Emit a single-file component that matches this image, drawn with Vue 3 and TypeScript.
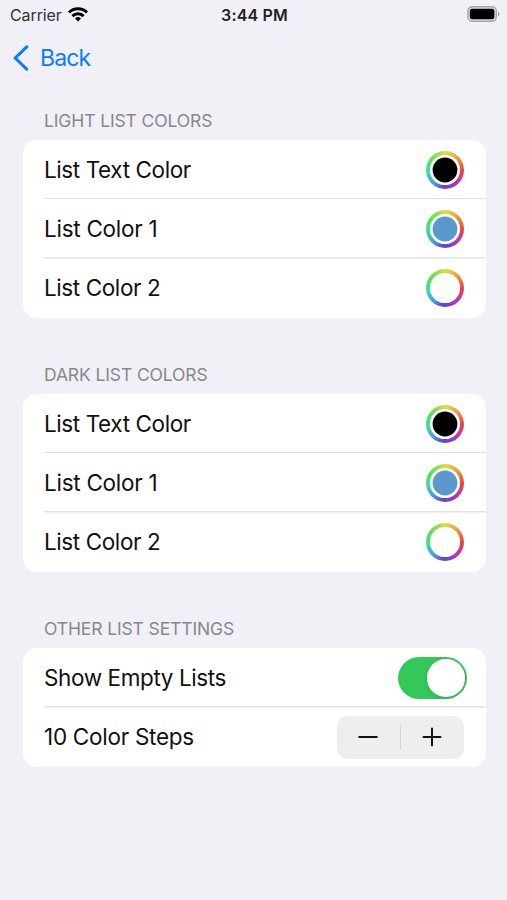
<script setup lang="ts">
import { ref } from 'vue'

interface ColorRow {
  label: string
  color: string
}

interface ColorSection {
  title: string
  rows: ColorRow[]
}

const makeRows = (): ColorRow[] => [
  { label: 'List Text Color', color: '#000000' },
  { label: 'List Color 1', color: '#5b99cc' },
  { label: 'List Color 2', color: '#ffffff' },
]

const sections = ref<ColorSection[]>([
  { title: 'Light List Colors', rows: makeRows() },
  { title: 'Dark List Colors', rows: makeRows() },
])

const showEmpty = ref(true)
const steps = ref(10)
</script>

<template>
  <div class="screen">
    <header class="status">
      <div class="carrier">
        <span>Carrier</span>
        <svg class="wifi" viewBox="0 0 20 15" width="20" height="15">
          <g fill="none" stroke="#000" stroke-width="2.9">
            <path d="M1 5.5a12.8 12.8 0 0 1 18 0" />
            <path d="M4.4 9.1a8 8 0 0 1 11.2 0" />
          </g>
          <path d="M10 14.4l-3-3a4.3 4.3 0 0 1 6 0z" fill="#000" />
        </svg>
      </div>
      <span class="time">3:44 PM</span>
      <svg class="battery" viewBox="0 0 33 16" width="33" height="16">
        <rect x="0.9" y="0.7" width="28.4" height="14.6" rx="4.2" fill="#e2e2e5" stroke="#a5a5a8" stroke-width="1.4" />
        <rect x="2.8" y="2.8" width="24.6" height="10.4" rx="2.3" fill="#000" />
        <path d="M31 5.7c2 .7 2 3.9 0 4.6z" fill="#a5a5a8" />
      </svg>
    </header>

    <nav class="nav">
      <button class="back" type="button">
        <svg viewBox="0 0 16 26" width="16" height="26">
          <path d="M13.7 1.9L2.2 13l11.5 11.1" fill="none" stroke="#087cff" stroke-width="3.1" stroke-linecap="round" stroke-linejoin="round" />
        </svg>
        <span>Back</span>
      </button>
    </nav>

    <main class="content">
      <section v-for="section in sections" :key="section.title" class="section">
        <h2>{{ section.title }}</h2>
        <div class="card">
          <div v-for="row in section.rows" :key="row.label" class="row">
            <span class="label">{{ row.label }}</span>
            <button class="well" type="button" :aria-label="row.label">
              <svg viewBox="0 0 38 38" width="38" height="38">
                <circle cx="19" cy="19" r="15.1" fill="#fff" />
                <circle cx="19" cy="19" r="12.4" :fill="row.color" />
              </svg>
            </button>
          </div>
        </div>
      </section>

      <section class="section">
        <h2>Other List Settings</h2>
        <div class="card short">
          <div class="row">
            <span class="label">Show Empty Lists</span>
            <button class="toggle" :class="{ on: showEmpty }" type="button" role="switch" :aria-checked="showEmpty" @click="showEmpty = !showEmpty">
              <span class="knob"></span>
            </button>
          </div>
          <div class="row">
            <span class="label steps">{{ steps }} Color Steps</span>
            <div class="stepper">
              <button type="button" aria-label="Decrease" @click="steps--">
                <svg viewBox="0 0 20 20" width="20" height="20">
                  <path d="M1.2 10h17.6" stroke="#111" stroke-width="2" stroke-linecap="round" />
                </svg>
              </button>
              <span class="divider"></span>
              <button type="button" aria-label="Increase" @click="steps++">
                <svg viewBox="0 0 20 20" width="20" height="20">
                  <path d="M1.5 10h17M10 1.5v17" stroke="#111" stroke-width="2" stroke-linecap="round" />
                </svg>
              </button>
            </div>
          </div>
        </div>
      </section>
    </main>
  </div>
</template>

<style>
body {
  background: #f1f0f6;
}
</style>

<style scoped>
.screen {
  box-sizing: border-box;
  width: 507px;
  height: 900px;
  overflow: hidden;
  background: #f1f0f6;
  font-family: Inter, "Liberation Sans", sans-serif;
  color: #111;
}

button {
  margin: 0;
  padding: 0;
  border: 0;
  background: none;
  font: inherit;
  color: inherit;
}

svg {
  display: block;
}

.status {
  display: grid;
  grid-template-columns: 1fr auto 1fr;
  align-items: center;
  height: 30px;
  padding: 0 8px 0 10px;
}

.carrier {
  display: flex;
  align-items: center;
  gap: 6.5px;
  font-size: 16px;
  letter-spacing: -0.1px;
  color: #333;
}

.wifi {
  margin-top: -1px;
}

.time {
  font-size: 16px;
  font-weight: 600;
  letter-spacing: 0.15px;
  color: #222;
}

.battery {
  justify-self: end;
  margin: -2px -1px 0 0;
}

.nav {
  display: flex;
  align-items: center;
  height: 56px;
  padding-left: 12.5px;
}

.back {
  display: flex;
  align-items: center;
  gap: 11.5px;
  font-size: 23px;
  line-height: 28px;
  color: #087cff;
}

.back span {
  letter-spacing: -0.85px;
}

.content {
  padding: 24px 21.5px 0 22.5px;
}

.section {
  height: 254px;
}

h2 {
  margin: 0;
  height: 30px;
  padding-left: 21.5px;
  font-size: 17.5px;
  font-weight: 400;
  line-height: 22px;
  letter-spacing: -0.12px;
  text-transform: uppercase;
  color: #88878c;
}

.card {
  display: grid;
  grid-template-rows: repeat(3, 1fr);
  height: 178px;
  border-radius: 14px;
  background: #fff;
}

.card.short {
  grid-template-rows: repeat(2, 1fr);
  height: 119px;
}

.row {
  display: flex;
  align-items: center;
  justify-content: space-between;
  margin-left: 21.5px;
  padding-right: 21.5px;
}

.row:not(:last-child) {
  background: linear-gradient(#e2e2e4, #e2e2e4) bottom / 100% 1.5px no-repeat;
}

.label {
  font-size: 22.5px;
  line-height: 28px;
  letter-spacing: -0.4px;
}

.row:nth-child(2) .label {
  letter-spacing: -0.27px;
}

.well {
  width: 38px;
  height: 38px;
  border-radius: 50%;
  background: conic-gradient(#e1dc45, #e9a042 45deg, #e4453e 90deg, #d43a92 120deg, #873ad8 158deg, #6340dc 185deg, #4a9be2 220deg, #3fdc9d 262deg, #55df61 300deg, #93e14b 335deg, #e1dc45);
}

.toggle {
  display: flex;
  align-items: center;
  box-sizing: border-box;
  width: 69px;
  height: 42px;
  margin-right: -2.5px;
  padding: 0 2px;
  border-radius: 21px;
  background: #e9e9ea;
}

.toggle.on {
  justify-content: flex-end;
  background: #34c759;
}

.knob {
  width: 37.5px;
  height: 37.5px;
  border-radius: 50%;
  background: #fff;
  box-shadow: 0 2px 5px rgba(0, 0, 0, 0.1);
}

.stepper {
  display: grid;
  grid-template-columns: 1fr 1px 1fr;
  align-items: center;
  width: 127px;
  height: 43px;
  border-radius: 10.5px;
  background: #eeeeef;
}

.stepper button {
  display: grid;
  place-items: center;
  height: 100%;
  padding-right: 2px;
}

.divider {
  height: 25px;
  background: #d5d5d7;
}
</style>
